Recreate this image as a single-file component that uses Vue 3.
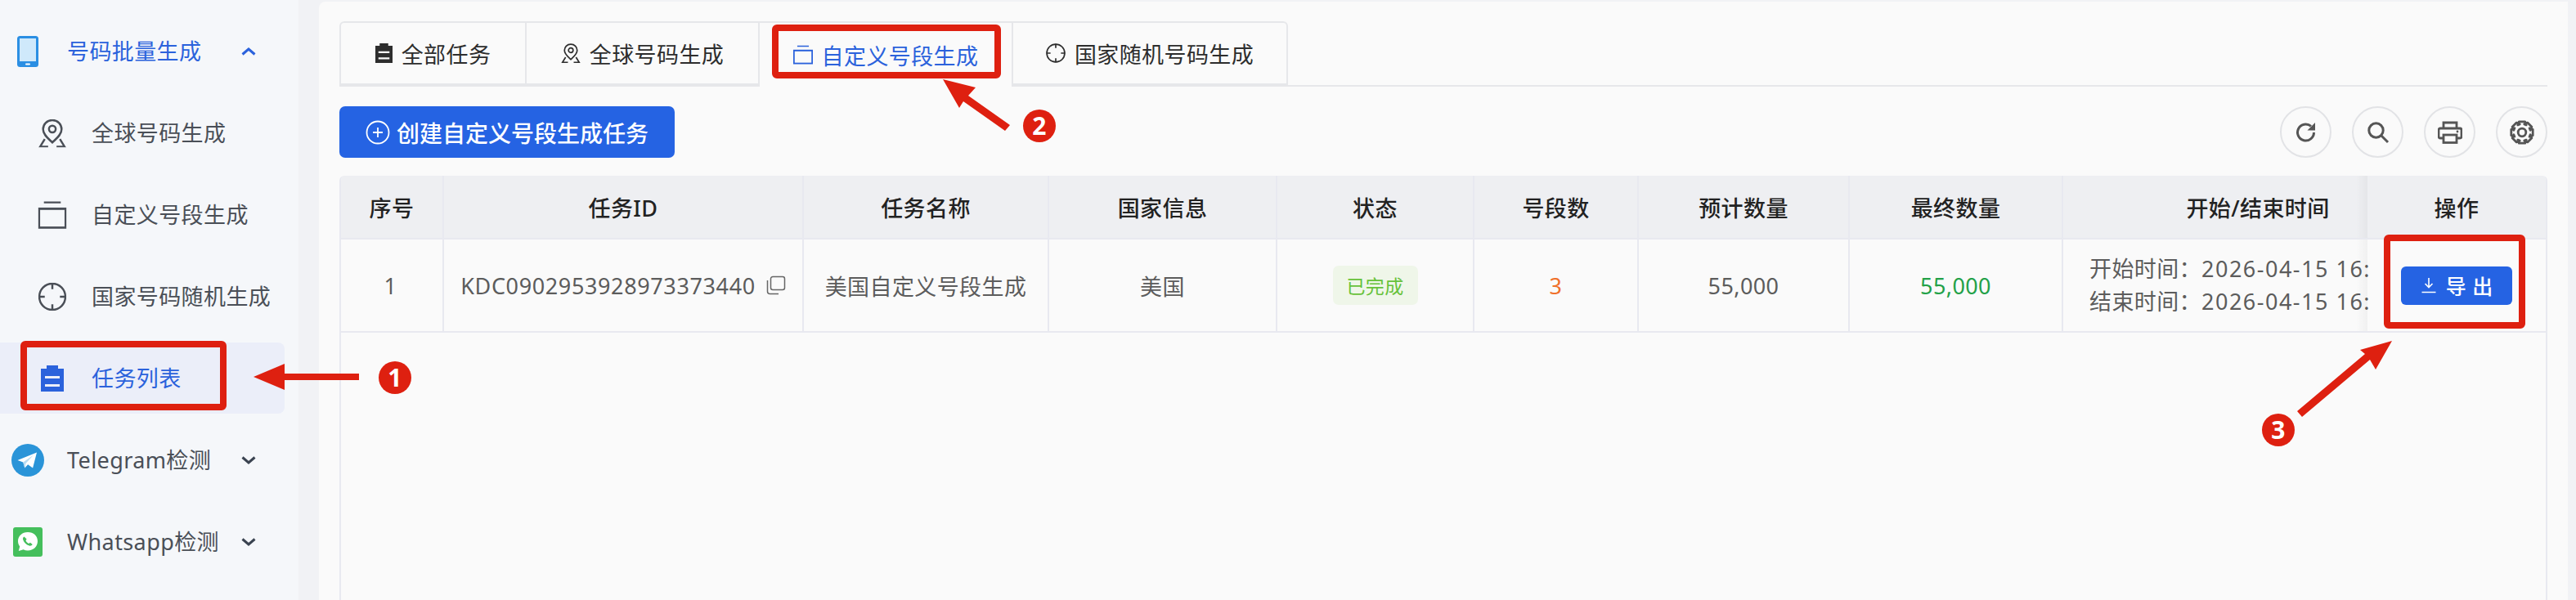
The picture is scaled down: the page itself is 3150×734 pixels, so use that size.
<template>
  <div class="page">
    <svg width="0" height="0" class="defs">
      <defs>
        <symbol id="i-pin" viewBox="0 0 34 34">
          <path d="M17 1.500C10.500 1.500 6 6.400 6 12.200 6 19 12.500 23.600 17 28c4.500-4.400 11-9 11-15.800C28 6.400 23.500 1.500 17 1.500z" fill="none" stroke="currentColor" stroke-width="2.400" />
          <circle cx="17" cy="12" r="4" fill="none" stroke="currentColor" stroke-width="2.400" />
          <path d="M8 24 2.500 33H12M26 24l5.500 9H22" fill="none" stroke="currentColor" stroke-width="2.400" />
        </symbol>
        <symbol id="i-stack" viewBox="0 0 34 34">
          <path d="M7 2H27M1 9.500H33" fill="none" stroke="currentColor" stroke-width="2.200" />
          <rect x="1.200" y="9.500" width="31.600" height="22.500" fill="none" stroke="currentColor" stroke-width="2.600" />
        </symbol>
        <symbol id="i-target" viewBox="0 0 34 34">
          <circle cx="17" cy="17" r="15.500" fill="none" stroke="currentColor" stroke-width="2.400" />
          <path d="M17 1v7M17 26v7M1 17h7M26 17h7" fill="none" stroke="currentColor" stroke-width="2.400" />
        </symbol>
        <symbol id="i-clip" viewBox="0 0 28 32">
          <path d="M0 4H7V0H21V4H28V32H0Z M5 13V16H23V13Z M5 23V26H23V23Z" fill="currentColor" fill-rule="evenodd" />
        </symbol>
      </defs>
    </svg>

    <aside class="sidebar">
      <div class="nav-row nav-open">
        <svg class="nav-main-icon" width="26" height="38" viewBox="0 0 26 38">
          <rect width="26" height="38" rx="3.500" fill="#2b8fe3" />
          <path d="M3 3H23V31H3Z" fill="#cfe9fb" />
          <rect x="10" y="33.500" width="6" height="2" rx="1" fill="#fff" />
        </svg>
        <span class="nav-label">号码批量生成</span>
        <svg class="chev" width="18" height="10" viewBox="0 0 18 10"><path d="M1.500 8.500 9 2l7.500 6.500" fill="none" stroke="currentColor" stroke-width="3" /></svg>
      </div>
      <div v-for="item in subItems" :key="item.label" class="nav-row sub-row" :class="{ 'sub-active': item.active }">
        <span class="sub-icon">
          <svg v-if="item.active" width="28" height="32"><use href="#i-clip" /></svg>
          <svg v-else width="35" height="35"><use :href="item.icon" /></svg>
        </span>
        <span class="nav-label">{{ item.label }}</span>
      </div>
      <div class="nav-row">
        <svg class="nav-main-icon" width="40" height="40" viewBox="0 0 40 40">
          <circle cx="20" cy="20" r="20" fill="#2a94d8" />
          <path d="M31 10.500 7.500 20l6.800 2.500 2 7 3.800-4.200 6 4.300z" fill="#fff" />
          <path d="M14.300 22.500 27 13.500 17.500 24l-1.200 5.500z" fill="#b9dcf2" />
        </svg>
        <span class="nav-label">Telegram检测</span>
        <svg class="chev" width="18" height="10" viewBox="0 0 18 10"><path d="M1.500 1.500 9 8l7.500-6.500" fill="none" stroke="currentColor" stroke-width="3" /></svg>
      </div>
      <div class="nav-row">
        <svg class="nav-main-icon" width="36" height="36" viewBox="0 0 36 36">
          <rect width="36" height="36" rx="3" fill="#45bf5c" />
          <path d="M18 6C11 6 6 10.800 6 17c0 2.500.8 4.700 2.200 6.500L6.800 29l5.800-1.700c1.600.8 3.400 1.200 5.400 1.200 7 0 12-5 12-11.500S25 6 18 6z" fill="#fff" />
          <path d="M13.500 11.500c-1.300.8-1.800 2.200-1.300 3.800 1.100 3.400 4 6.200 7.500 7.200 1.700.5 3.200 0 4-1.400l-2.800-2.300-1.700 1.100c-1.600-.7-3-2.100-3.700-3.700l1.100-1.700z" fill="#45bf5c" />
        </svg>
        <span class="nav-label">Whatsapp检测</span>
        <svg class="chev" width="18" height="10" viewBox="0 0 18 10"><path d="M1.500 1.500 9 8l7.500-6.500" fill="none" stroke="currentColor" stroke-width="3" /></svg>
      </div>
    </aside>

    <main class="content">
      <div class="tabs">
        <div v-for="tab in tabs" :key="tab.label" class="tab" :class="{ 'tab-active': tab.active }">
          <svg v-if="tab.clip" width="21" height="24"><use href="#i-clip" /></svg>
          <svg v-else width="24" height="24"><use :href="tab.icon" /></svg>
          <span>{{ tab.label }}</span>
        </div>
      </div>

      <div class="toolbar">
        <button class="btn-create">
          <svg width="30" height="30" viewBox="0 0 30 30">
            <circle cx="15" cy="15" r="13.500" fill="none" stroke="#fff" stroke-width="1.800" />
            <path d="M15 9v12M9 15h12" stroke="#fff" stroke-width="1.800" />
          </svg>
          <span>创建自定义号段生成任务</span>
        </button>
        <div class="tools">
          <button class="tool">
            <svg width="26" height="26" viewBox="0 0 26 26"><path d="M22.500 13A10 10 0 1 1 19 5.400" fill="none" stroke="#555" stroke-width="3" /><path d="M24 1V10.500H14.500Z" fill="#555" /></svg>
          </button>
          <button class="tool">
            <svg width="28" height="28" viewBox="0 0 28 28"><circle cx="11.500" cy="11.500" r="8.700" fill="none" stroke="#555" stroke-width="3" /><path d="M18 18l8 8" stroke="#555" stroke-width="3" /></svg>
          </button>
          <button class="tool">
            <svg width="30" height="28" viewBox="0 0 30 28"><path d="M7 9V2H23V9M7 21H3a2 2 0 0 1-2-2V11a2 2 0 0 1 2-2H27a2 2 0 0 1 2 2V19a2 2 0 0 1-2 2H23" fill="none" stroke="#555" stroke-width="2.800" /><rect x="7" y="17" width="16" height="9.500" fill="none" stroke="#555" stroke-width="2.800" /><circle cx="24" cy="13" r="1.400" fill="#555" /></svg>
          </button>
          <button class="tool">
            <svg width="30" height="30" viewBox="0 0 30 30"><path :d="gear" fill="none" stroke="#555" stroke-width="2.800" stroke-linejoin="round" /><circle cx="15" cy="15" r="4.800" fill="none" stroke="#555" stroke-width="2.800" /></svg>
          </button>
        </div>
      </div>

      <section class="table">
        <div class="grid grid-head">
          <div v-for="h in headers" :key="h" class="cell">{{ h }}</div>
        </div>
        <div class="grid grid-row">
          <div class="cell seq-cell">1</div>
          <div class="cell id-cell">
            <span>KDC0902953928973373440</span>
            <svg width="24" height="24" viewBox="0 0 24 24"><path d="M8 1.500H20a2.500 2.500 0 0 1 2.500 2.500V15a2.500 2.500 0 0 1-2.500 2.500H8A2.500 2.500 0 0 1 5.500 15V4A2.500 2.500 0 0 1 8 1.500z" fill="none" stroke="#666" stroke-width="1.500" /><path d="M1.500 6V19.500a3 3 0 0 0 3 3H15" fill="none" stroke="#666" stroke-width="1.500" /></svg>
          </div>
          <div class="cell">美国自定义号段生成</div>
          <div class="cell">美国</div>
          <div class="cell"><span class="tag">已完成</span></div>
          <div class="cell orange">3</div>
          <div class="cell">55,000</div>
          <div class="cell green">55,000</div>
          <div class="cell time-cell">
            <div>开始时间：<span class="date">2026-04-15 16:</span></div>
            <div>结束时间：<span class="date">2026-04-15 16:</span></div>
          </div>
          <div class="cell">
            <button class="btn-export">
              <svg width="20" height="20" viewBox="0 0 20 20"><path d="M10 1v11M5.500 8 10 12.500 14.500 8M1.500 18.500h17" fill="none" stroke="#fff" stroke-width="1.600" /></svg>
              <span>导 出</span>
            </button>
          </div>
        </div>
      </section>
    </main>

    <svg class="marks" width="3150" height="734" viewBox="0 0 3150 734">
      <g fill="none" stroke="#de2010" stroke-width="8">
        <rect x="29" y="421" width="244" height="77" rx="2" />
        <rect x="948" y="34" width="272" height="58" rx="2" />
        <rect x="2919" y="291" width="165" height="107" rx="2" />
      </g>
      <g fill="#de2010">
        <path d="M310 461 348 445V457H439V465H348V477Z" />
        <path d="M1153 97 1193 107 1184 117 1235 153 1229 160 1178 124 1173 132Z" />
        <path d="M2925 417 2905 452 2898 440 2815 510 2809 503 2892 433 2886 428Z" />
        <circle cx="483" cy="462" r="20" />
        <circle cx="1271" cy="154" r="20" />
        <circle cx="2786" cy="526" r="20" />
      </g>
      <g class="mark-num" fill="#fff" text-anchor="middle">
        <text x="483" y="473">1</text>
        <text x="1271" y="165">2</text>
        <text x="2786" y="537">3</text>
      </g>
    </svg>
  </div>
</template>

<script setup>
import { computed } from "vue";

const subItems = [
  { label: "全球号码生成", icon: "#i-pin" },
  { label: "自定义号段生成", icon: "#i-stack" },
  { label: "国家号码随机生成", icon: "#i-target" },
  { label: "任务列表", active: true },
];

const tabs = [
  { label: "全部任务", clip: true },
  { label: "全球号码生成", icon: "#i-pin" },
  { label: "自定义号段生成", icon: "#i-stack", active: true },
  { label: "国家随机号码生成", icon: "#i-target" },
];

const headers = ["序号", "任务ID", "任务名称", "国家信息", "状态", "号段数", "预计数量", "最终数量", "开始/结束时间", "操作"];

// eight tooth cog outline
const gear = computed(() => {
  const pts = [];
  for (let i = 0; i < 8; i++) {
    const a = (i * Math.PI) / 4 - Math.PI / 2;
    const step = 0.27;
    [[10.5, -0.52], [13.7, -step], [13.7, step], [10.5, 0.52]].forEach(([r, d]) => {
      pts.push(`${(15 + r * Math.cos(a + d)).toFixed(2)} ${(15 + r * Math.sin(a + d)).toFixed(2)}`);
    });
  }
  return `M${pts.join("L")}Z`;
});
</script>

<style>
html,
body {
  margin: 0;
  background: #f1f2f5;
}
</style>

<style scoped>
.page {
  position: relative;
  width: 3150px;
  height: 734px;
  overflow: hidden;
  display: flex;
  font-family: "Noto Sans", "Noto Sans CJK SC", sans-serif;
  font-size: 27px;
  letter-spacing: 0.4px;
  color: #555;
  background: #f1f2f5;
}

.defs {
  position: absolute;
}

.sidebar {
  width: 365px;
  margin-right: 25px;
  padding-top: 13px;
  box-sizing: border-box;
  background: #f5f7fa;
  flex-shrink: 0;
}

.nav-row {
  position: relative;
  display: flex;
  align-items: center;
  height: 100px;
  padding-left: 82px;
  margin-right: 17px;
  color: #4a4f57;
}

.nav-main-icon {
  position: absolute;
  left: 34px;
  top: 50%;
  transform: translate(-50%, -50%);
}

.nav-open {
  color: #2b62dc;
}

.chev {
  position: absolute;
  left: 295px;
  top: 45px;
  color: #3a4350;
}

.nav-open .chev {
  color: #2b62dc;
}

.sub-row {
  padding-left: 112px;
}

.sub-icon {
  position: absolute;
  left: 64px;
  top: 50%;
  transform: translate(-50%, -50%);
  display: flex;
}

.sub-active {
  color: #2b62dc;
}

.sub-active::before {
  content: "";
  position: absolute;
  left: 0;
  right: 0;
  top: 6px;
  bottom: 7px;
  border-radius: 0 8px 8px 0;
  background: #ebeef9;
}

.sub-active .nav-label,
.sub-active .sub-icon {
  z-index: 1;
}

.nav-label {
  position: relative;
  top: -2px;
}

.content {
  width: 2750px;
  margin-top: 2px;
  padding: 24px 25px 0;
  box-sizing: border-box;
  background: #fafafa;
  border-radius: 8px 0 0 0;
}

.tabs {
  display: flex;
  height: 78px;
  border-bottom: 2px solid #e6e7ea;
  box-sizing: content-box;
}

.tab {
  display: flex;
  align-items: center;
  justify-content: center;
  gap: 11px;
  box-sizing: border-box;
  height: 78px;
  color: #2d2d2d;
  border: 2px solid #e6e7ea;
  border-left: 0;
}

.tab:nth-child(1) {
  width: 229px;
  border-left: 2px solid #e6e7ea;
  border-radius: 6px 0 0 0;
}

.tab:nth-child(2) {
  width: 285px;
}

.tab:nth-child(3) {
  width: 310px;
}

.tab:nth-child(4) {
  width: 336px;
  border-radius: 0 6px 0 0;
}

.tab-active {
  height: 80px;
  color: #2b62dc;
  background: #fafafa;
  border-bottom: 0;
}

.toolbar {
  display: flex;
  align-items: center;
  justify-content: space-between;
  height: 63px;
  margin-top: 24px;
}

.btn-create {
  display: flex;
  align-items: center;
  gap: 8px;
  width: 410px;
  height: 63px;
  padding: 0 0 0 32px;
  border: 0;
  border-radius: 7px;
  background: #2563e3;
  color: #fff;
  font: 500 28px "Noto Sans CJK SC", sans-serif;
}

.tools {
  display: flex;
  gap: 25px;
}

.tool {
  display: flex;
  align-items: center;
  justify-content: center;
  width: 63px;
  height: 63px;
  padding: 0;
  border: 2px solid #e2e3e6;
  border-radius: 50%;
  background: #fafafa;
}

.table {
  margin-top: 22px;
  width: 2700px;
  height: 520px;
  box-sizing: border-box;
  border: 0 solid #e8e9f0;
  border-width: 0 2px;
  border-radius: 6px 6px 0 0;
  overflow: hidden;
}

.grid {
  display: grid;
  grid-template-columns: 126px 440px 300px 279px 241px 201px 258px 261px 372px 218px;
}

.grid-head {
  height: 78px;
  background: #eeeff2;
  color: #222;
  font-weight: 500;
  border-bottom: 2px solid #e8e9f0;
  box-sizing: border-box;
}

.grid-row {
  height: 114px;
  border-bottom: 2px solid #e8e9f0;
  box-sizing: border-box;
  color: #5c5c5c;
}

.cell {
  display: flex;
  align-items: center;
  justify-content: center;
  border-right: 2px solid #e8e9f0;
  box-sizing: border-box;
  min-width: 0;
  white-space: nowrap;
}

.cell:nth-child(9) {
  position: relative;
  border-right: 0;
}

.grid-head .cell:nth-child(9) {
  padding-left: 104px;
}

.cell:nth-child(9)::after {
  content: "";
  position: absolute;
  right: 0;
  top: 0;
  bottom: 0;
  width: 14px;
  background: linear-gradient(to right, transparent, rgba(0, 0, 0, 0.04));
}

.cell:nth-child(10) {
  border-right: 0;
}

.seq-cell {
  padding-right: 3px;
}

.id-cell {
  gap: 13px;
  letter-spacing: 0.62px;
}

.time-cell {
  display: block;
  padding: 16px 0 0 32px;
  line-height: 40px;
}

.date {
  letter-spacing: 1.5px;
}

.tag {
  display: flex;
  align-items: center;
  justify-content: center;
  width: 104px;
  height: 48px;
  border-radius: 7px;
  background: #eff6e9;
  color: #67c23a;
  font-size: 23px;
}

.orange {
  color: #f0702a;
}

.green {
  color: #23a148;
}

.btn-export {
  display: flex;
  align-items: center;
  justify-content: center;
  gap: 11px;
  width: 136px;
  height: 47px;
  padding: 0;
  border: 0;
  border-radius: 6px;
  background: #2563e3;
  color: #fff;
  font: 500 25px "Noto Sans CJK SC", sans-serif;
  word-spacing: 2px;
}

.marks {
  position: absolute;
  left: 0;
  top: 0;
  pointer-events: none;
}

.mark-num {
  font: 700 30px "Noto Sans", sans-serif;
}
</style>
